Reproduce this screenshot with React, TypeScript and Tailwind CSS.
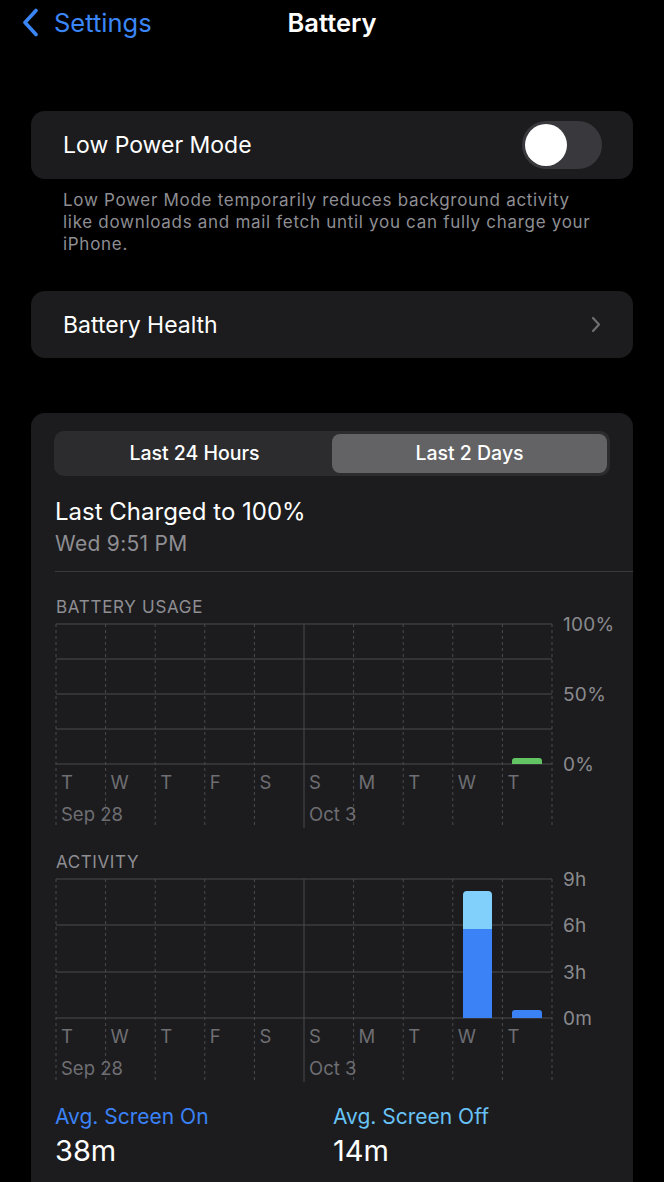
import React from "react";

const FONT = { fontFamily: "Inter, 'Noto Sans', sans-serif" };

const days = ["T", "W", "T", "F", "S", "S", "M", "T", "W", "T"];

function Chart({
  rows,
  labels,
  bars,
}: {
  rows: number[];
  labels: string[];
  bars: React.ReactNode;
}) {
  const left = 25;
  const right = 521;
  const colW = (right - left) / 10;
  const base = rows[rows.length - 1];
  const bottom = base + 62;
  return (
    <svg width={602} height={bottom + 4} className="block overflow-visible" style={FONT}>
      {Array.from({ length: 11 }).map((_, i) => {
        const x = left + i * colW;
        if (i === 5)
          return (
            <line key={i} x1={x} x2={x} y1={rows[0]} y2={bottom + 2} stroke="#4a4a4e" strokeWidth={1} />
          );
        return (
          <line
            key={i}
            x1={x}
            x2={x}
            y1={rows[0]}
            y2={bottom}
            stroke="#4a4a4e"
            strokeWidth={1}
            strokeDasharray="3 3"
          />
        );
      })}
      {rows.map((y, i) => (
        <line key={i} x1={left} x2={right} y1={y} y2={y} stroke="#4a4a4e" strokeWidth={1} />
      ))}
      {bars}
      {labels.map((l, i) => (
        <text key={l} x={532} y={rows[i * (rows.length === 5 ? 2 : 1)] + 7} fill="#8a8a8e" fontSize={19} letterSpacing={0.3}>
          {l}
        </text>
      ))}
      {days.map((d, i) => (
        <text key={i} x={left + i * colW + 5} y={base + 25} fill="#6e6e73" fontSize={18.5}>
          {d}
        </text>
      ))}
      <text x={left + 5} y={base + 57} fill="#6e6e73" fontSize={18.5}>
        Sep 28
      </text>
      <text x={left + 5 * colW + 5} y={base + 57} fill="#6e6e73" fontSize={18.5}>
        Oct 3
      </text>
    </svg>
  );
}

export default function App() {
  return (
    <div className="h-[1182px] w-[664px] bg-black text-white overflow-hidden" style={FONT}>
      {/* Header */}
      <div className="relative h-[45px] flex items-center">
        <div className="flex items-center pl-[22px] gap-[15px] text-[#3b86f6]">
          <svg width="17" height="29" viewBox="0 0 17 29">
            <path d="M14 2.5 L3 14.5 L14 26.5" fill="none" stroke="#3b86f6" strokeWidth="3.6" strokeLinecap="round" strokeLinejoin="round" />
          </svg>
          <span className="text-[25.5px] leading-none">Settings</span>
        </div>
        <div className="absolute left-0 right-0 text-center text-[25.5px] font-semibold leading-none pointer-events-none">
          Battery
        </div>
      </div>

      <div className="px-[31px] pt-[66px]">
        {/* Low power mode */}
        <div className="h-[68px] rounded-[14px] bg-[#1c1c1e] flex items-center justify-between pl-[32px] pr-[31px]">
          <span className="text-[23px]">Low Power Mode</span>
          <div className="w-[80px] h-[48px] rounded-full bg-[#39393d] flex items-center px-[3px]">
            <div className="w-[42px] h-[42px] rounded-full bg-white" />
          </div>
        </div>
        <p className="pl-[32px] pr-[40px] pt-[10px] text-[17px] leading-[22px] tracking-[0.7px] text-[#8e8e93]">
          Low Power Mode temporarily reduces background activity like downloads and mail fetch until you can fully charge your iPhone.
        </p>

        {/* Battery Health */}
        <div className="mt-[36px] h-[67px] rounded-[14px] bg-[#1c1c1e] flex items-center justify-between pl-[32px] pr-[32px]">
          <span className="text-[23px] pt-[2px]">Battery Health</span>
          <svg width="10" height="17" viewBox="0 0 10 17">
            <path d="M2 2 L8 8.5 L2 15" fill="none" stroke="#6e6e73" strokeWidth="2.2" strokeLinecap="round" strokeLinejoin="round" />
          </svg>
        </div>

        {/* Usage card */}
        <div className="mt-[55px] rounded-t-[14px] bg-[#1c1c1e] pt-[18px] pb-[60px]">
          <div className="mx-[23px] h-[45px] rounded-[10px] bg-[#2c2c2f] p-[3px] flex">
            <div className="flex-1 flex items-center justify-center text-[19.5px] font-medium">Last 24 Hours</div>
            <div className="flex-1 flex items-center justify-center text-[19.5px] font-medium rounded-[8px] bg-[#636366]">
              Last 2 Days
            </div>
          </div>
          <div className="pl-[24px] mt-[22px] text-[24px] leading-[28px]">Last Charged to 100%</div>
          <div className="pl-[24px] mt-[5px] text-[21px] leading-[26px] tracking-[0.3px] text-[#8e8e93]">Wed 9:51 PM</div>
          <div className="ml-[24px] mt-[14px] h-px bg-[#38383a]" />

          <div className="pl-[25px] mt-[25px] text-[17px] leading-[20px] tracking-[0.7px] text-[#8e8e93]">BATTERY USAGE</div>
          <Chart
            rows={[7, 42, 77, 112, 147]}
            labels={["100%", "50%", "0%"]}
            bars={<path d="M481 147 L481 144 Q481 141 484 141 L508 141 Q511 141 511 144 L511 147 Z" fill="#62c462" />}
          />

          <div className="pl-[25px] mt-[22px] text-[17px] leading-[20px] tracking-[0.6px] text-[#8e8e93]">ACTIVITY</div>
          <Chart
            rows={[7, 53, 100, 146]}
            labels={["9h", "6h", "3h", "0m"]}
            bars={
              <g>
                <path d="M432 57 L432 23 Q432 19 436 19 L457 19 Q461 19 461 23 L461 57 Z" fill="#81cffb" />
                <rect x={432} y={57} width={29} height={89} fill="#3a82f6" />
                <path d="M481 146 L481 141 Q481 138 484 138 L508 138 Q511 138 511 141 L511 146 Z" fill="#3a82f6" />
              </g>
            }
          />

          <div className="mt-[21px] flex">
            <div className="pl-[24px] w-[302px]">
              <div className="text-[21px] leading-[24px] text-[#3a82f6]">Avg. Screen On</div>
              <div className="mt-[5px] text-[29px] leading-[34px]">38m</div>
            </div>
            <div>
              <div className="text-[21px] leading-[24px] text-[#68c2f6]">Avg. Screen Off</div>
              <div className="mt-[5px] text-[29px] leading-[34px]">14m</div>
            </div>
          </div>
        </div>
      </div>
    </div>
  );
}
